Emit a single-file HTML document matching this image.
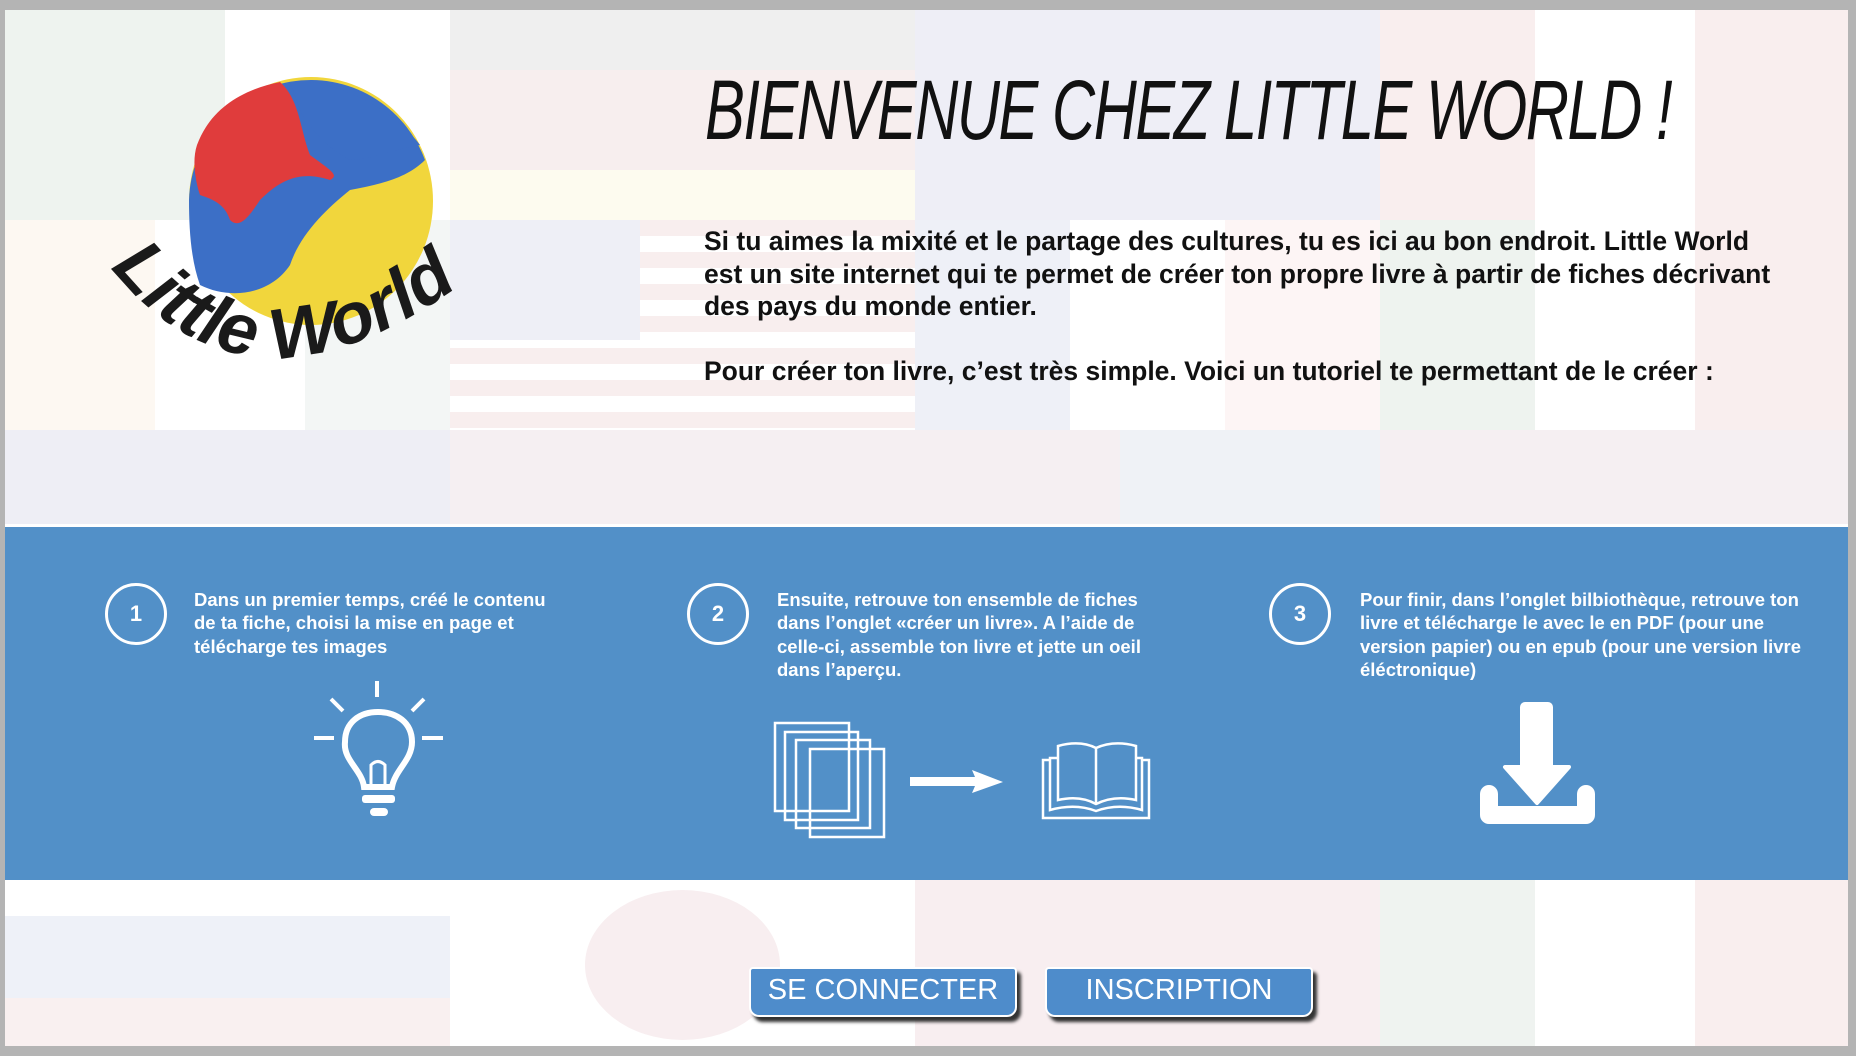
<!DOCTYPE html>
<html><head><meta charset="utf-8"><style>
html,body{margin:0;padding:0;}
body{width:1856px;height:1056px;background:#b4b4b4;position:relative;overflow:hidden;font-family:"Liberation Sans",sans-serif;}
#page{position:absolute;left:5px;top:10px;width:1843px;height:1036px;background:#fff;overflow:hidden;}
.b{position:absolute;}
#title{position:absolute;left:700px;top:52px;font-family:"Liberation Sans",sans-serif;font-style:italic;font-size:84px;letter-spacing:-2px;color:#111;transform:scaleX(0.71);transform-origin:left top;white-space:nowrap;font-weight:normal;}
#intro{position:absolute;left:699px;top:215px;width:1090px;font-weight:bold;font-size:26.5px;line-height:32.5px;color:#111;}
#band{position:absolute;left:0;top:514px;width:1843px;height:353px;background:#5290c8;border-top:3px solid #fff;}
.circ{position:absolute;width:56px;height:56px;border:3px solid #fff;border-radius:50%;color:#fff;font-weight:bold;font-size:22px;text-align:center;line-height:56px;}
.st{position:absolute;color:#fff;font-size:18.5px;line-height:23.3px;font-weight:bold;}
.btn{position:absolute;top:957px;height:46px;width:264px;background:#4e8ccb;border:2px solid #fff;border-radius:4px 4px 10px 10px;box-shadow:4px 5px 3px #333;color:#fff;font-size:29px;text-align:center;line-height:42px;}
</style></head><body>
<div id="page">
<div class="b" style="left:0;top:0;width:220px;height:210px;background:#eef3ef"></div>
<div class="b" style="left:220px;top:0;width:225px;height:210px;background:#fff"></div>
<div class="b" style="left:445px;top:0;width:465px;height:60px;background:#efefef"></div>
<div class="b" style="left:445px;top:60px;width:465px;height:100px;background:#f7eeee"></div>
<div class="b" style="left:445px;top:160px;width:465px;height:50px;background:#fdfbef"></div>
<div class="b" style="left:910px;top:0;width:465px;height:210px;background:#eeeef6"></div>
<div class="b" style="left:1375px;top:0;width:155px;height:210px;background:#f9eeee"></div>
<div class="b" style="left:1530px;top:0;width:160px;height:210px;background:#fff"></div>
<div class="b" style="left:1690px;top:0;width:160px;height:210px;background:#f9eeee"></div>
<div class="b" style="left:0;top:210px;width:150px;height:210px;background:#fdf8f2"></div>
<div class="b" style="left:150px;top:210px;width:150px;height:210px;background:#fff"></div>
<div class="b" style="left:300px;top:210px;width:145px;height:210px;background:#f3f6f5"></div>
<div class="b" style="left:445px;top:210px;width:465px;height:210px;background:repeating-linear-gradient(#f8eeee 0 16px,#fff 16px 32px)"></div>
<div class="b" style="left:445px;top:210px;width:190px;height:120px;background:#eeeff6"></div>
<div class="b" style="left:910px;top:210px;width:155px;height:210px;background:#eef0f7"></div>
<div class="b" style="left:1065px;top:210px;width:155px;height:210px;background:#fff"></div>
<div class="b" style="left:1220px;top:210px;width:155px;height:210px;background:#fdf5f5"></div>
<div class="b" style="left:1375px;top:210px;width:155px;height:210px;background:#eef3ef"></div>
<div class="b" style="left:1530px;top:210px;width:160px;height:210px;background:#fff"></div>
<div class="b" style="left:1690px;top:210px;width:160px;height:210px;background:#f9eeee"></div>
<div class="b" style="left:0;top:420px;width:1843px;height:100px;background:#f5eff2"></div>
<div class="b" style="left:0;top:420px;width:445px;height:100px;background:#eeeef5"></div>
<div class="b" style="left:1115px;top:420px;width:260px;height:100px;background:#eff2f6"></div>
<div class="b" style="left:0;top:867px;width:445px;height:169px;background:#fff"></div>
<div class="b" style="left:0;top:906px;width:445px;height:82px;background:#eef1f8"></div>
<div class="b" style="left:0;top:988px;width:445px;height:48px;background:#f9f0f0"></div>
<div class="b" style="left:580px;top:880px;width:195px;height:150px;border-radius:50%;background:#f8eef0"></div>
<div class="b" style="left:910px;top:870px;width:465px;height:166px;background:#f8eef0"></div>
<div class="b" style="left:1375px;top:870px;width:155px;height:166px;background:#eff3f0"></div>
<div class="b" style="left:1690px;top:870px;width:160px;height:166px;background:#f9eeee"></div>

<svg class="b" style="left:0;top:0" width="560" height="440" viewBox="0 0 560 440">
 <ellipse cx="306" cy="191" rx="122" ry="124" fill="#f1d63c"/>
 <path d="M184 190 A122 124 0 0 1 420 150 C 400 170 370 175 345 180 C 320 200 295 225 285 255 C 265 285 225 290 195 275 C 186 250 184 220 184 190Z" fill="#3c6fc6"/>
 <path d="M192 135 C 205 100 235 80 275 72 C 295 90 295 120 305 145 C 325 160 335 165 325 170 C 295 160 275 170 255 190 C 245 205 235 220 225 210 C 220 195 210 190 195 185 C 190 170 187 150 192 135Z" fill="#e03c3c"/>
 <path d="M285 72 C 325 68 385 95 415 135 C 385 140 365 150 345 150 C 325 140 305 120 295 100Z" fill="#3c6fc6"/>
 <path id="arc" d="M100 250 Q 250 450 500 240" fill="none"/>
 <text font-family="Liberation Sans,sans-serif" font-weight="bold" font-style="italic" font-size="72" fill="#1a1a1a">
  <textPath href="#arc" startOffset="2%">Little World</textPath>
 </text>
</svg>

<div id="title">BIENVENUE CHEZ LITTLE WORLD !</div>
<div id="intro">Si tu aimes la mixité et le partage des cultures, tu es ici au bon endroit. Little World est un site internet qui te permet de créer ton propre livre à partir de fiches décrivant des pays du monde entier.<br><br>Pour créer ton livre, c’est très simple. Voici un tutoriel te permettant de le créer :</div>

<div id="band"></div>
<div class="circ" style="left:100px;top:573px">1</div>
<div class="circ" style="left:682px;top:573px">2</div>
<div class="circ" style="left:1264px;top:573px">3</div>
<div class="st" style="left:189px;top:578px;width:372px">Dans un premier temps, créé le contenu de ta fiche, choisi la mise en page et télécharge tes images</div>
<div class="st" style="left:772px;top:578px;width:385px">Ensuite, retrouve ton ensemble de fiches dans l’onglet «créer un livre». A l’aide de celle-ci, assemble ton livre et jette un oeil dans l’aperçu.</div>
<div class="st" style="left:1355px;top:578px;width:455px">Pour finir, dans l’onglet bilbiothèque, retrouve ton livre et télécharge le avec le en PDF (pour une version papier) ou en epub (pour une version livre éléctronique)</div>

<svg class="b" style="left:0;top:0" width="1843" height="1036" viewBox="5 10 1843 1036">
 <g stroke="#fff" fill="none" stroke-width="4">
  <line x1="377" y1="681" x2="377" y2="697"/>
  <line x1="331" y1="699" x2="343" y2="711"/>
  <line x1="424" y1="699" x2="412" y2="711"/>
  <line x1="314" y1="738" x2="334" y2="738"/>
  <line x1="422" y1="738" x2="443" y2="738"/>
  <path d="M364 787 C 362 770 343 760 345 742 C 345 722 360 712 378 712 C 396 712 412 722 412 742 C 412 760 395 770 392 787 Z" stroke-width="6"/>
  <path d="M371 787 L371 765 Q378 758 385 765 L385 787" stroke-width="3"/>
 </g>
 <rect x="362" y="795" width="33" height="8" rx="3" fill="#fff"/>
 <rect x="370" y="808" width="18" height="8" rx="4" fill="#fff"/>
 <g stroke="#fff" stroke-width="2.5" fill="none">
  <rect x="775" y="723" width="74" height="88"/>
  <rect x="785" y="732" width="73" height="88"/>
  <rect x="796" y="740" width="74" height="88"/>
  <rect x="810" y="749" width="74" height="88"/>
  <path d="M1058 800 L1058 746 Q1080 740 1096 748 Q1114 740 1136 746 L1136 800 Q1114 795 1096 804 Q1080 795 1058 800Z"/>
  <line x1="1096" y1="748" x2="1096" y2="804"/>
  <path d="M1058 758 L1050 758 L1050 810 Q1075 803 1096 811 Q1118 803 1142 810 L1142 758 L1136 758"/>
  <path d="M1050 760 L1043 760 L1043 818 L1149 818 L1149 760 L1142 760"/>
 </g>
 <path d="M910 777 L975 777 L972 770 L1003 782 L972 793 L975 786 L910 786Z" fill="#fff"/>
 <rect x="1520" y="702" width="33" height="70" rx="5" fill="#fff"/>
 <path d="M1505 767 L1569 767 L1537 803Z" fill="#fff" stroke="#fff" stroke-width="4" stroke-linejoin="round"/>
 <path d="M1489 794 L1489 815 L1586 815 L1586 794" fill="none" stroke="#fff" stroke-width="18" stroke-linecap="round" stroke-linejoin="round"/>
</svg>

<div class="btn" style="left:744px">SE CONNECTER</div>
<div class="btn" style="left:1040px">INSCRIPTION</div>
</div>
</body></html>
